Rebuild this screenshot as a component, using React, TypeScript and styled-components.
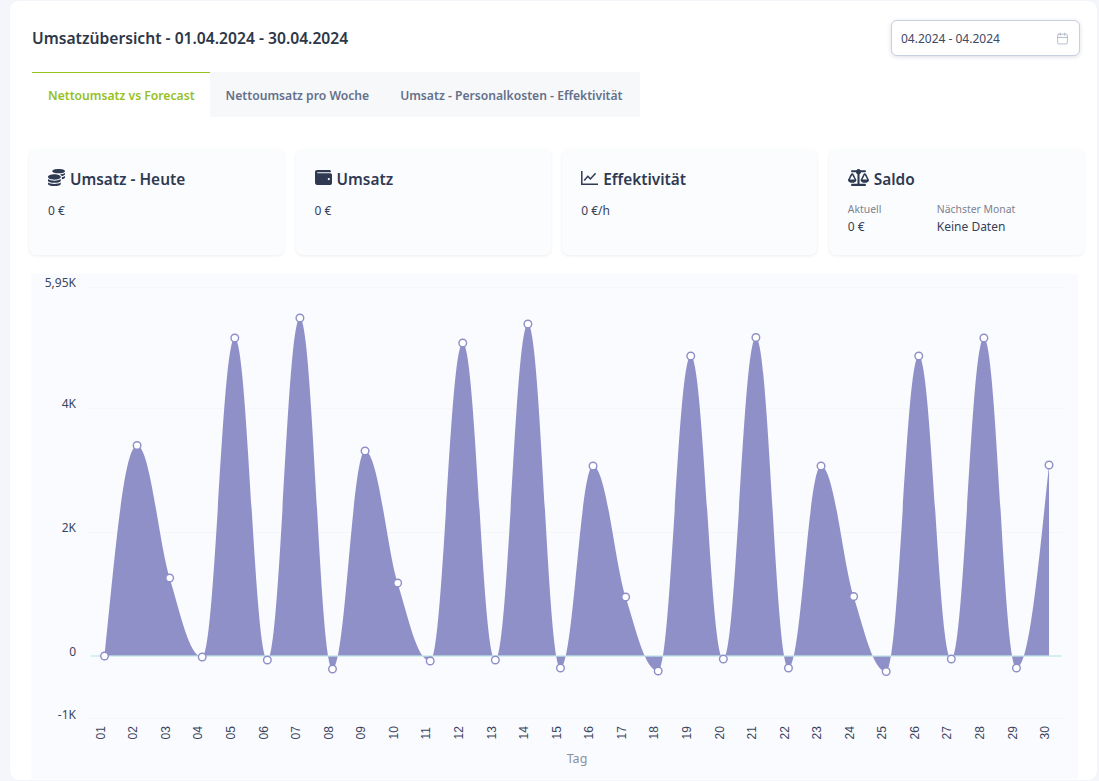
import React from "react";
import styled, { createGlobalStyle } from "styled-components";
import { FaCoins, FaWallet, FaBalanceScale } from "react-icons/fa";
import { Calendar } from "lucide-react";

const Global = createGlobalStyle`
  html, body { margin: 0; padding: 0; background: #f4f6fb; }
  body { font-family: "Noto Sans", "Open Sans", sans-serif; color: #2f3a52; overflow: hidden; }
`;

const Page = styled.div`
  width: 1099px; height: 781px; box-sizing: border-box; padding: 1px 2px 1px 10px;
`;
const Card = styled.main`
  box-sizing: border-box; height: 779px; background: #fff; border-radius: 8px;
  padding: 18px 13px 0 19px; overflow: hidden; box-shadow: 0 0 1px #dfe3ea;
`;
const Header = styled.header`
  display: flex; align-items: center; justify-content: space-between; height: 37px; padding: 0 4px 0 3px;
`;
const Title = styled.h1`
  margin: 0; font-size: 15.65px; font-weight: 600; color: #2d3748;
`;
const DateBox = styled.div`
  box-sizing: border-box; width: 189px; height: 36px; display: flex; align-items: center; justify-content: space-between;
  padding: 1px 10px 0 9px; border: 1px solid #c7cfe0; border-radius: 6px; background: #fff;
  box-shadow: 0 1px 4px rgba(60, 70, 100, .18); font-size: 12px; color: #3d4a66;
  svg { color: #a6afc2; }
`;
const Tabs = styled.nav`
  display: flex; width: 608px; margin: 16px 0 0 3px; background: #f7f8fa; height: 45px;
`;
const Tab = styled.div<{ $active?: boolean }>`
  box-sizing: border-box; height: 45px; display: flex; align-items: center; font-size: 12.15px; font-weight: 600;
  padding: 0 15px 0 16px; white-space: nowrap;
  color: ${p => (p.$active ? "#95c11f" : "#64708a")};
  background: ${p => (p.$active ? "#fff" : "transparent")};
  border-top: 1px solid ${p => (p.$active ? "#95c11f" : "transparent")};
`;
const Stats = styled.section`
  display: grid; grid-template-columns: repeat(4, 255px); column-gap: 11.6px; margin-top: 32px;
`;
const Stat = styled.article`
  box-sizing: border-box; height: 106px; background: #fbfcfe; border-radius: 7px; padding: 19px 19px 0;
  box-shadow: 0 1px 3px rgba(70, 80, 110, .1);
`;
const StatTitle = styled.h2`
  margin: 0; display: flex; align-items: center; gap: 5px; font-size: 15.4px; font-weight: 600; color: #2f3a52; height: 22px;
  svg { flex: none; margin-top: -3px; }
`;
const StatValue = styled.div`
  margin-top: 12px; font-size: 12px; color: #36415a;
`;
const Split = styled.div`
  display: grid; grid-template-columns: 89px auto; margin-top: 12px;
`;
const Small = styled.div`
  font-size: 10.4px; color: #7b8290; line-height: 14px;
`;
const SplitValue = styled.div`
  font-size: 12px; color: #36415a; line-height: 17px; margin-top: 2px;
`;
const ChartPanel = styled.section`
  width: 1047px; height: 505px; margin: 19px 0 0 2px; background: #fafbfe;
  svg { display: block; }
`;

const X0 = 104.5, DX = 32.57, Y0 = 656;
const ys = [656, 445.5, 578, 657, 338, 660, 318, 669, 451, 583, 661, 343, 660, 324, 668, 466, 597, 671, 356, 659, 337.5, 668, 466, 596.5, 671.5, 356, 659, 338, 668, 465];
const xs = ys.map((_, i) => X0 + i * DX);

function curvePath() {
  const n = ys.length;
  const s: number[] = [];
  for (let i = 0; i < n - 1; i++) s.push((ys[i + 1] - ys[i]) / DX);
  const t: number[] = [];
  for (let i = 0; i < n; i++) {
    if (i === 0) t.push(1.5 * s[0]);
    else if (i === n - 1) t.push(1.5 * s[n - 2]);
    else if (s[i - 1] * s[i] <= 0) t.push(0);
    else t.push((s[i - 1] + s[i]) / 2);
  }
  const h = DX / 3;
  const hx = (i: number) => (t[i] === 0 ? DX * 0.4 : h);
  let d = `M${xs[0]},${ys[0]}`;
  for (let i = 0; i < n - 1; i++) {
    d += `C${xs[i] + hx(i)},${ys[i] + t[i] * h} ${xs[i + 1] - hx(i + 1)},${ys[i + 1] - t[i + 1] * h} ${xs[i + 1]},${ys[i + 1]}`;
  }
  return d;
}
const curve = curvePath();
const area = `${curve}L${xs[29]},${Y0}L${xs[0]},${Y0}Z`;
const grid = [287, 408, 532, 718];
const yLabels: [string, number][] = [["5,95K", 287], ["4K", 408], ["2K", 532], ["0", 656], ["-1K", 719]];

const AxisText = styled.text`
  font-family: "Noto Sans", "Open Sans", sans-serif; font-size: 12px; fill: #3a4560;
`;
const TickText = styled.text`
  font-family: "Liberation Sans", Arial, sans-serif; font-size: 12px; fill: #3a4560;
`;
const AxisTitle = styled.text`
  font-family: "Noto Sans", "Open Sans", sans-serif; font-size: 12.5px; fill: #8a90a0;
`;

function Chart() {
  return (
    <svg width={1047} height={505} viewBox="31 274 1047 505">
      {grid.map(y => <line key={y} x1={86} x2={1062} y1={y + 0.5} y2={y + 0.5} stroke="#f5f6fa" />)}
      <path d={area} fill="#9090c9" />
      <line x1={91} x2={1062} y1={656} y2={656} stroke="#bfe6e6" strokeWidth={1.4} strokeOpacity={0.85} />
      {yLabels.map(([t, y]) => <AxisText key={t} x={76} y={y} textAnchor="end">{t}</AxisText>)}
      {xs.map((x, i) => <circle key={i} cx={x} cy={ys[i]} r={3.8} fill="#fff" stroke="#8e8ec8" strokeWidth={1.4} />)}
      {xs.map((x, i) => (
        <TickText key={i} transform={`translate(${x - 3},739.5) rotate(-90)`} textAnchor="start" dominantBaseline="middle">
          {String(i + 1).padStart(2, "0")}
        </TickText>
      ))}
      <AxisTitle x={577} y={763} textAnchor="middle">Tag</AxisTitle>
    </svg>
  );
}

function ChartLineIcon() {
  return (
    <svg width={17} height={16} viewBox="0 0 17 16" fill="none" stroke="currentColor">
      <path d="M.8 1v13.2H17" strokeWidth={1.5} />
      <path d="M3.2 10.5l3.6-4.2 2.6 2.6 5.2-5.6" strokeWidth={1.5} />
    </svg>
  );
}

export default function App() {
  return (
    <Page>
      <Global />
      <Card>
        <Header>
          <Title>Umsatzübersicht - 01.04.2024 - 30.04.2024</Title>
          <DateBox>04.2024 - 04.2024<Calendar size={13} strokeWidth={1.5} /></DateBox>
        </Header>
        <Tabs>
          <Tab $active>Nettoumsatz vs Forecast</Tab>
          <Tab>Nettoumsatz pro Woche</Tab>
          <Tab>Umsatz - Personalkosten - Effektivität</Tab>
        </Tabs>
        <Stats>
          <Stat>
            <StatTitle><FaCoins size={17} />Umsatz - Heute</StatTitle>
            <StatValue>0 €</StatValue>
          </Stat>
          <Stat>
            <StatTitle><FaWallet size={17} />Umsatz</StatTitle>
            <StatValue>0 €</StatValue>
          </Stat>
          <Stat>
            <StatTitle><ChartLineIcon />Effektivität</StatTitle>
            <StatValue>0 €/h</StatValue>
          </Stat>
          <Stat>
            <StatTitle><FaBalanceScale size={21} />Saldo</StatTitle>
            <Split>
              <div><Small>Aktuell</Small><SplitValue>0 €</SplitValue></div>
              <div><Small>Nächster Monat</Small><SplitValue>Keine Daten</SplitValue></div>
            </Split>
          </Stat>
        </Stats>
        <ChartPanel><Chart /></ChartPanel>
      </Card>
    </Page>
  );
}
